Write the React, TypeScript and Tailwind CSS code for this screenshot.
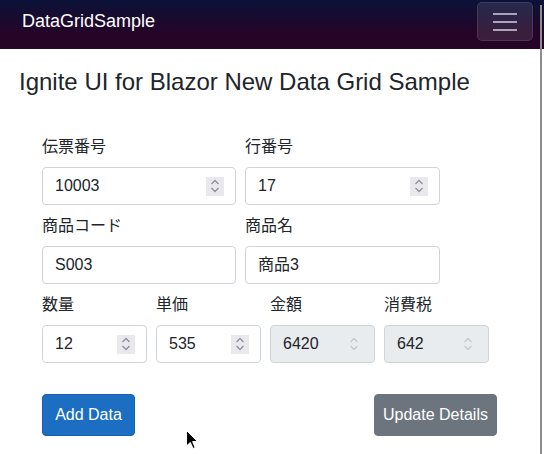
import React from "react";

function Spinner({ disabled }: { disabled?: boolean }) {
  const c = disabled ? "#c4c7cc" : "#8f8f9d";
  return (
    <div
      className={`ml-auto mr-[11px] w-[18px] h-[19px] flex items-center justify-center ${
        disabled ? "" : "bg-[#e9e9ed]"
      }`}
    >
      <svg width="10" height="14" viewBox="0 0 10 14" fill="none">
        <path d="M1.5 5 L5 1.5 L8.5 5" stroke={c} strokeWidth="1.3" />
        <path d="M1.5 9 L5 12.5 L8.5 9" stroke={c} strokeWidth="1.3" />
      </svg>
    </div>
  );
}

function Field({
  label,
  value,
  number,
  disabled,
}: {
  label: string;
  value: string;
  number?: boolean;
  disabled?: boolean;
}) {
  return (
    <div className="flex flex-col">
      <div className="text-[16px] leading-[24px] mb-2">{label}</div>
      <div
        className={`h-[38px] border border-[#ced4da] rounded-[4px] flex items-center pl-3 text-[16px] leading-[24px] ${
          disabled ? "bg-[#e9ecef]" : "bg-white"
        }`}
      >
        <span>{value}</span>
        {number && <Spinner disabled={disabled} />}
      </div>
    </div>
  );
}

export default function App() {
  return (
    <div className="relative w-[544px] h-[454px] overflow-hidden bg-white font-['Liberation_Sans','Noto_Sans_CJK_JP',sans-serif] text-[#212529]">
      <nav className="h-[49px] flex items-start justify-between bg-[linear-gradient(180deg,#0b1239_0%,#250427_70%)]">
        <div className="ml-[22px] mt-[9px] text-[18px] leading-[24px] text-white">
          DataGridSample
        </div>
        <div className="mt-[2px] mr-[11px] w-[56px] h-[39px] rounded-[5px] border border-[rgba(255,255,255,0.1)] bg-[rgba(255,255,255,0.1)] flex flex-col items-center justify-center gap-[6px]">
          <div className="w-[24px] h-[2px] bg-[#aaa2b8]" />
          <div className="w-[24px] h-[2px] bg-[#aaa2b8]" />
          <div className="w-[24px] h-[2px] bg-[#aaa2b8]" />
        </div>
      </nav>

      <h1 className="ml-[19px] mt-[18px] text-[24px] leading-[29px] font-normal">
        Ignite UI for Blazor New Data Grid Sample
      </h1>

      <div className="ml-[42px] mt-[39px] flex flex-col gap-[9px]">
        <div className="grid grid-cols-[194px_195px] gap-x-[9px]">
          <Field label="伝票番号" value="10003" number />
          <Field label="行番号" value="17" number />
        </div>
        <div className="grid grid-cols-[194px_195px] gap-x-[9px]">
          <Field label="商品コード" value="S003" />
          <Field label="商品名" value="商品3" />
        </div>
        <div className="grid grid-cols-[105px_105px_105px_105px] gap-x-[9px]">
          <Field label="数量" value="12" number />
          <Field label="単価" value="535" number />
          <Field label="金額" value="6420" number disabled />
          <Field label="消費税" value="642" number disabled />
        </div>
      </div>

      <div className="ml-[42px] mt-[31px] w-[455px] flex justify-between">
        <div className="w-[93px] h-[42px] rounded-[4px] bg-[#1b6ec2] border border-[#1861ac] text-white text-[16px] leading-[24px] flex items-center justify-center">
          Add Data
        </div>
        <div className="w-[123px] h-[42px] rounded-[4px] bg-[#6c757d] border border-[#6c757d] text-white text-[16px] leading-[24px] flex items-center justify-center">
          Update Details
        </div>
      </div>

      <div className="absolute left-[540px] top-[5px] w-[2px] h-[449px] bg-[#8c8c8c]" />

      <svg
        className="absolute left-[186px] top-[430px]"
        width="13"
        height="20"
        viewBox="0 0 13 20"
      >
        <path
          d="M0.5 0.5 L0.5 16 L4.3 12.4 L7 18.5 L9.2 17.5 L6.6 11.6 L11.5 11.6 Z"
          fill="#000"
          stroke="#fff"
          strokeWidth="1"
        />
      </svg>
    </div>
  );
}
